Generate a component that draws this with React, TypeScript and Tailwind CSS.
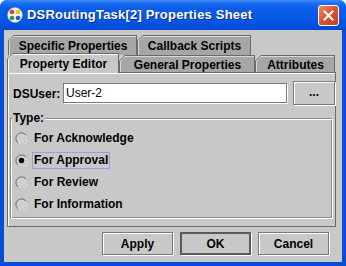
import React from "react";

function Tab({
  label,
  className,
  selected,
}: {
  label: string;
  className: string;
  selected?: boolean;
}) {
  return (
    <div
      className={
        "relative shrink-0 bg-[#6a6a6a] [clip-path:polygon(6px_0,100%_0,100%_100%,0_100%,0_6px)] " +
        className
      }
    >
      <div
        className={
          "absolute left-[1px] top-[1px] right-[1px] bottom-0 [clip-path:polygon(5px_0,100%_0,100%_100%,0_100%,0_5px)] " +
          (selected ? "bg-[#ffffff]" : "bg-[#d8d8d8]")
        }
      >
        <div
          className={
            "absolute left-[1px] top-[1px] right-0 bottom-0 [clip-path:polygon(4px_0,100%_0,100%_100%,0_100%,0_4px)] flex items-center justify-center text-[12px] font-bold text-black " +
            (selected ? "bg-[#c8c8c8]" : "bg-[#a6a6a6]")
          }
        >
          {label}
        </div>
      </div>
    </div>
  );
}

function Radio({ label, checked, focus }: { label: string; checked?: boolean; focus?: boolean }) {
  return (
    <div className="flex items-center h-[22px]">
      <svg width="13" height="13" viewBox="0 0 13 13" className="ml-[5px] shrink-0">
        <circle cx="6.5" cy="6.5" r="5.6" fill="#cfcfcf" stroke="#646464" strokeWidth="1" />
        <path d="M3.2 10.6 A5 5 0 0 0 10.6 3.2" fill="none" stroke="#ffffff" strokeWidth="1" />
        {checked && <circle cx="6.5" cy="6.5" r="2.7" fill="#000000" />}
      </svg>
      <span
        className={
          "ml-[4px] text-[12px] font-bold text-black leading-[15px] px-[1px] " +
          (focus ? "border border-[#9c9ce0]" : "border border-transparent")
        }
      >
        {label}
      </span>
    </div>
  );
}

function Btn({ label, def }: { label: string; def?: boolean }) {
  return (
    <div className="relative w-[72px] h-[24px] shrink-0">
      <div className="absolute left-[1px] top-[1px] w-[71px] h-[23px] border border-white" />
      <div
        className={
          "absolute left-0 top-0 w-[71px] h-[23px] flex items-center justify-center text-[12px] font-bold text-black " +
          (def ? "border-2 border-[#5a5a5a]" : "border border-[#7a7a7a]")
        }
      >
        {label}
      </div>
    </div>
  );
}

export default function App() {
  return (
    <div className="w-[346px] h-[266px] font-['Liberation_Sans',Arial,sans-serif] bg-[#0a4cd4] rounded-t-[7px] overflow-hidden flex flex-col">
      {/* title bar */}
      <div className="h-[30px] shrink-0 relative flex items-center bg-[linear-gradient(to_bottom,#3d8cf7_0px,#1d6ff0_3px,#0a5de8_8px,#0558e6_20px,#0450dc_27px,#0348d0_30px)]">
        <svg width="16" height="16" viewBox="0 0 16 16" className="ml-[7px] shrink-0">
          <circle cx="8" cy="8" r="7.5" fill="#f4f4f4" stroke="#9aa" strokeWidth="0.6" />
          <circle cx="5" cy="5" r="2.3" fill="#e83a2a" />
          <circle cx="11" cy="5" r="2.3" fill="#f2c21a" />
          <circle cx="5" cy="11" r="2.3" fill="#2a9a3a" />
          <circle cx="11" cy="11" r="2.3" fill="#2a5ad8" />
          <circle cx="8" cy="8" r="1.6" fill="#ffffff" />
        </svg>
        <span className="ml-[4px] text-white font-bold text-[13px] tracking-[0.2px] [text-shadow:1px_1px_0_#0a2a8a]">
          DSRoutingTask[2] Properties Sheet
        </span>
        <div className="absolute left-[318px] top-[5px] w-[21px] h-[21px] rounded-[3px] border border-white bg-[linear-gradient(135deg,#f08a6a,#d9532f_50%,#c33d1c)] flex items-center justify-center">
          <svg width="11" height="11" viewBox="0 0 11 11">
            <path d="M1.5 1.5 L9.5 9.5 M9.5 1.5 L1.5 9.5" stroke="#ffffff" strokeWidth="2" strokeLinecap="square" />
          </svg>
        </div>
      </div>

      {/* content */}
      <div className="flex-1 ml-[4px] mr-[4px] mb-[4px] bg-[#c8c8c8] flex flex-col">
        {/* tabs */}
        <div className="pt-[5px] flex flex-col">
          <div className="flex pl-[4px] h-[20px]">
            <Tab label="Specific Properties" className="w-[129px] h-[20px]" />
            <Tab label="Callback Scripts" className="w-[114px] h-[20px]" />
          </div>
          <div className="flex pl-[3px] h-[20px] -mt-[2px] relative z-10 items-end">
            <Tab label="Property Editor" className="w-[112px] h-[20px] z-10" selected />
            <Tab label="General Properties" className="w-[136px] h-[17px] mb-[1px]" />
            <Tab label="Attributes" className="w-[80px] h-[17px] mb-[1px]" />
          </div>
        </div>

        {/* panel */}
        <div className="ml-[3px] mr-[6px] -mt-[1px] h-[155px] border border-[#6a6a6a] flex flex-col">
          <div className="border-t border-l border-white flex-1 flex flex-col pl-[4px] pr-[1px]">
            <div className="flex items-center h-[25px] mt-[7px]">
              <span className="text-[12px] font-bold text-black w-[50px] shrink-0">DSUser:</span>
              <div className="relative w-[225px] h-[21px] shrink-0">
                <div className="absolute left-[1px] top-[1px] w-[224px] h-[20px] border border-white" />
                <div className="absolute left-0 top-0 w-[224px] h-[20px] border border-[#7a7a7a] bg-white flex items-center pl-[2px] text-[12px] text-black">
                  User-2
                </div>
              </div>
              <div className="relative w-[43px] h-[25px] shrink-0 ml-[5px]">
                <div className="absolute left-[1px] top-[1px] w-[42px] h-[24px] border border-white" />
                <div className="absolute left-0 top-0 w-[42px] h-[24px] border border-[#7a7a7a] flex items-center justify-center text-[12px] font-bold text-black pb-[2px]">
                  ...
                </div>
              </div>
            </div>

            {/* group */}
            <div className="relative mt-[7px] ml-[-3px] mr-[2px] h-[105px]">
              <div className="absolute left-0 top-[5px] right-0 bottom-0 border border-[#8a8a8a]" />
              <div className="absolute left-[1px] top-[6px] right-[-1px] bottom-[-1px] border border-white" />
              <span className="absolute left-[2px] top-[-2px] bg-[#c8c8c8] px-[1px] text-[12px] font-bold text-black leading-[15px]">
                Type:
              </span>
              <div className="absolute left-0 top-[14px] flex flex-col">
                <Radio label="For Acknowledge" />
                <Radio label="For Approval" checked focus />
                <Radio label="For Review" />
                <Radio label="For Information" />
              </div>
            </div>
          </div>
        </div>

        {/* buttons */}
        <div className="flex justify-end gap-[6px] mt-[5px] mr-[12px]">
          <Btn label="Apply" />
          <Btn label="OK" def />
          <Btn label="Cancel" />
        </div>
      </div>
    </div>
  );
}
